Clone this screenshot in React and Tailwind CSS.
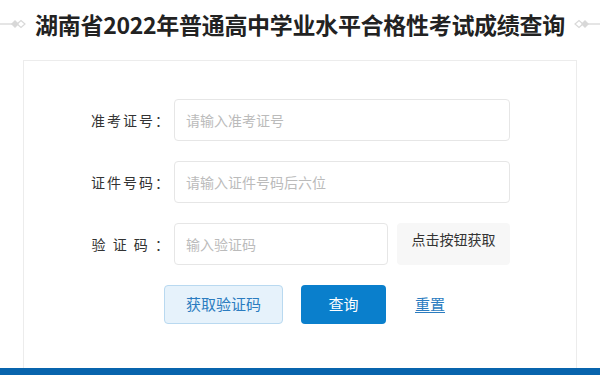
import React from "react";

function Ornament({ flip }) {
  return (
    <svg width="26" height="10" viewBox="0 0 26 10" className={"shrink-0 " + (flip ? "rotate-180" : "")}>
      <line x1="0" y1="5" x2="14" y2="5" stroke="#dcdcdc" strokeWidth="1.5" />
      <path d="M11 5 L15 1 L19 5 L15 9 Z" fill="#d8d8d8" />
      <path d="M17 5 L21 1.5 L25 5 L21 8.5 Z" fill="none" stroke="#d8d8d8" strokeWidth="1.2" />
    </svg>
  );
}

function Row({ label, children }) {
  return (
    <div className="flex items-center">
      <div className="w-[150px] text-right text-[14px] text-[#333] tracking-[2px] pr-[3px]">{label}</div>
      {children}
    </div>
  );
}

export default function App() {
  return (
    <div
      className="w-[600px] h-[375px] bg-white overflow-hidden flex flex-col"
      style={{ fontFamily: '"Noto Sans CJK SC", "Noto Sans", sans-serif' }}
    >
      <div className="h-[48px] flex items-center justify-between">
        <Ornament />
        <h1 className="text-[23px] font-bold text-[#222] leading-none whitespace-nowrap tracking-[-0.3px]">
          湖南省2022年普通高中学业水平合格性考试成绩查询
        </h1>
        <Ornament flip />
      </div>
      <div className="flex-1 mx-[23px] mt-[12px] border border-[#ececec] border-b-0 pt-[38px] flex flex-col gap-[20px]">
        <Row label="准考证号：">
          <input
            placeholder="请输入准考证号"
            className="w-[336px] h-[42px] border border-[#e6e6e6] rounded-[4px] px-[11px] text-[14px] placeholder:text-[#bbb] outline-none"
          />
        </Row>
        <Row label="证件号码：">
          <input
            placeholder="请输入证件号码后六位"
            className="w-[336px] h-[42px] border border-[#e6e6e6] rounded-[4px] px-[11px] text-[14px] placeholder:text-[#bbb] outline-none"
          />
        </Row>
        <Row label="验 证 码 ：">
          <input
            placeholder="输入验证码"
            className="w-[214px] h-[42px] border border-[#e6e6e6] rounded-[4px] px-[11px] text-[14px] placeholder:text-[#bbb] outline-none"
          />
          <div className="ml-[9px] w-[113px] h-[42px] bg-[#f7f7f7] rounded-[4px] text-[14px] text-[#333] text-center pt-[6px]">
            点击按钮获取
          </div>
        </Row>
        <div className="flex items-center pl-[140px]">
          <button className="w-[119px] h-[39px] bg-[#e6f2fb] border border-[#b9d9f0] rounded-[4px] text-[15px] text-[#2b7cc0]">
            获取验证码
          </button>
          <button className="ml-[18px] w-[85px] h-[39px] bg-[#0a7fcc] rounded-[4px] text-[15px] text-white">
            查询
          </button>
          <a className="ml-[29px] text-[15px] text-[#2b7cc0] underline underline-offset-2">重置</a>
        </div>
      </div>
      <div className="h-[7px] bg-[#0864ad]" />
    </div>
  );
}
